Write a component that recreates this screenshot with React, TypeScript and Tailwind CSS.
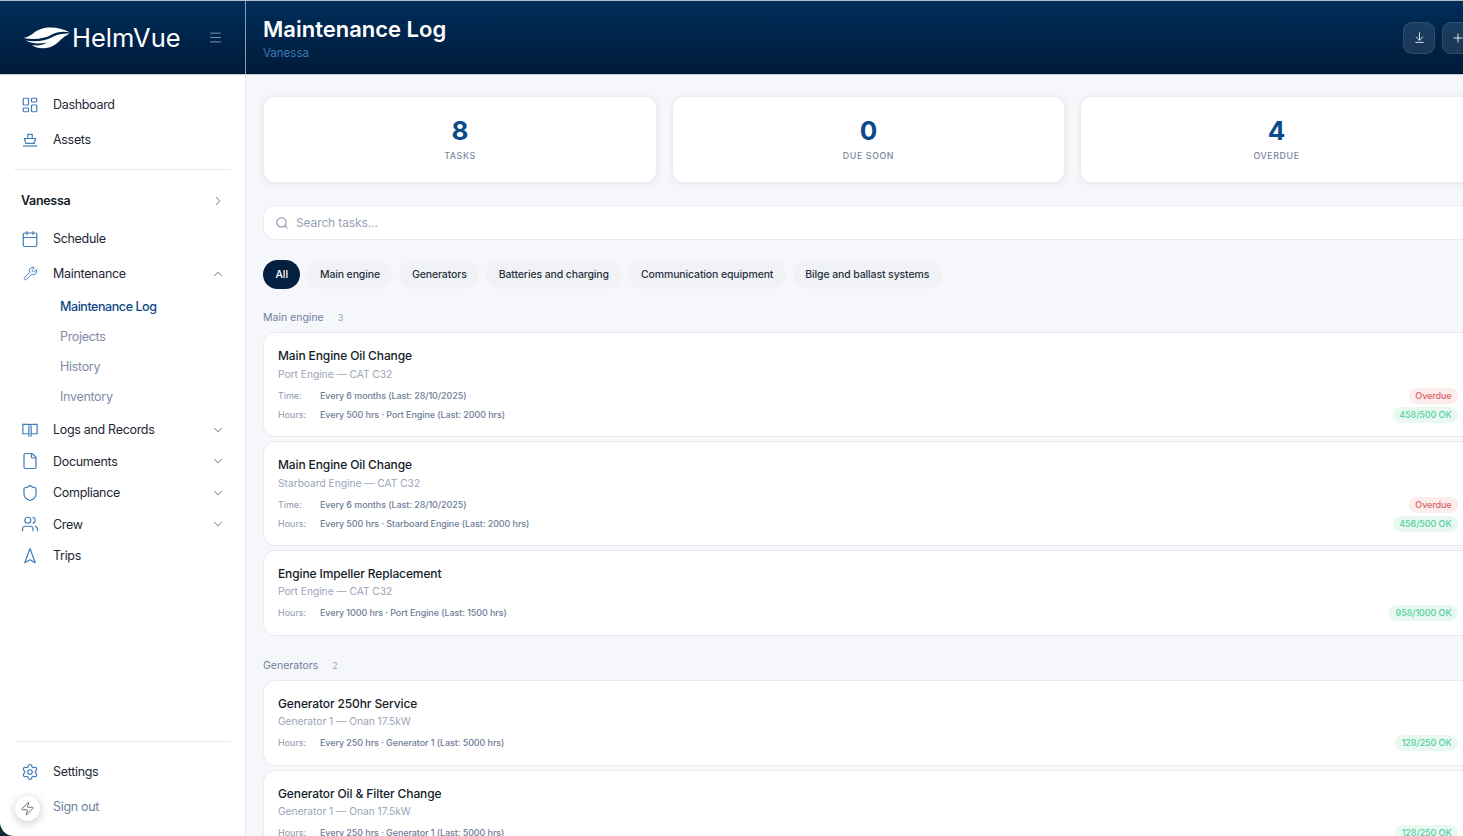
import React from "react";
import {
  LayoutDashboard,
  Calendar,
  Wrench,
  File,
  Shield,
  Users,
  Navigation2,
  Settings,
  Zap,
  Search,
  ArrowDownToLine,
  Plus,
  Menu,
  ChevronDown,
  ChevronUp,
  ChevronRight,
} from "lucide-react";

type IconProps = { className?: string; strokeWidth?: number };

const BoatIcon = ({ className, strokeWidth }: IconProps) => (
  <svg viewBox="0 0 24 24" fill="none" stroke="currentColor" strokeWidth={strokeWidth} className={className}>
    <path d="M9 9V4.5h6V9" />
    <path d="M4.5 10h15l-2 6.5h-11z" />
    <path d="M2.5 20h19" />
  </svg>
);

const OpenBookIcon = ({ className, strokeWidth }: IconProps) => (
  <svg viewBox="0 0 24 24" fill="none" stroke="currentColor" strokeWidth={strokeWidth} className={className}>
    <path d="M10.5 17H2.5V4.5h8c.8 0 1.5.7 1.5 1.5 0-.8.7-1.5 1.5-1.5h8V17h-8" />
    <path d="M10.5 6v15M13.5 6v15" />
  </svg>
);

const subItems = ["Projects", "History", "Inventory"];

const lowerNav = [
  { label: "Logs and Records", icon: OpenBookIcon, chevron: true },
  { label: "Documents", icon: File, chevron: true },
  { label: "Compliance", icon: Shield, chevron: true },
  { label: "Crew", icon: Users, chevron: true },
  { label: "Trips", icon: Navigation2, chevron: false },
];

const stats = [
  { value: "8", label: "TASKS" },
  { value: "0", label: "DUE SOON" },
  { value: "4", label: "OVERDUE" },
];

const filters = [
  "Main engine",
  "Generators",
  "Batteries and charging",
  "Communication equipment",
  "Bilge and ballast systems",
];

type Task = {
  title: string;
  sub: string;
  time?: string;
  hours: string;
  hoursBadge: string;
};

const groups: { name: string; count: number; tasks: Task[] }[] = [
  {
    name: "Main engine",
    count: 3,
    tasks: [
      {
        title: "Main Engine Oil Change",
        sub: "Port Engine — CAT C32",
        time: "Every 6 months (Last: 28/10/2025)",
        hours: "Every 500 hrs · Port Engine (Last: 2000 hrs)",
        hoursBadge: "458/500 OK",
      },
      {
        title: "Main Engine Oil Change",
        sub: "Starboard Engine — CAT C32",
        time: "Every 6 months (Last: 28/10/2025)",
        hours: "Every 500 hrs · Starboard Engine (Last: 2000 hrs)",
        hoursBadge: "456/500 OK",
      },
      {
        title: "Engine Impeller Replacement",
        sub: "Port Engine — CAT C32",
        hours: "Every 1000 hrs · Port Engine (Last: 1500 hrs)",
        hoursBadge: "958/1000 OK",
      },
    ],
  },
  {
    name: "Generators",
    count: 2,
    tasks: [
      {
        title: "Generator 250hr Service",
        sub: "Generator 1 — Onan 17.5kW",
        hours: "Every 250 hrs · Generator 1 (Last: 5000 hrs)",
        hoursBadge: "128/250 OK",
      },
      {
        title: "Generator Oil & Filter Change",
        sub: "Generator 1 — Onan 17.5kW",
        hours: "Every 250 hrs · Generator 1 (Last: 5000 hrs)",
        hoursBadge: "128/250 OK",
      },
    ],
  },
];

function NavRow({
  label,
  icon: Icon,
  chevron,
  rowClass,
  iconClass = "w-[18px] h-[18px]",
}: {
  label: string;
  icon: React.ComponentType<IconProps>;
  chevron?: "down" | "up";
  rowClass: string;
  iconClass?: string;
}) {
  return (
    <div className={`flex items-center pl-[21px] pr-[20px] ${rowClass}`}>
      <div className="w-[18px] h-[18px] shrink-0 flex items-center justify-center">
        <Icon className={`${iconClass} text-[#3f7cb8]`} strokeWidth={1.6} />
      </div>
      <span className="ml-[14px] pt-[2px] flex-1 text-[12.5px] tracking-[-0.025em] text-[#1e2635]">{label}</span>
      {chevron === "down" && <ChevronDown className="w-[14px] h-[14px] text-[#7e8ba3]" strokeWidth={1.75} />}
      {chevron === "up" && <ChevronUp className="w-[14px] h-[14px] text-[#7e8ba3]" strokeWidth={1.75} />}
    </div>
  );
}

function Sidebar() {
  return (
    <aside className="w-[246px] shrink-0 bg-white border-r border-[#e6e9f0] flex flex-col pt-[12px]">
      <NavRow label="Dashboard" icon={LayoutDashboard} rowClass="h-[35px]" />
      <NavRow label="Assets" icon={BoatIcon} rowClass="h-[35px]" />
      <div className="mx-[14px] mt-[12px] border-t border-[#e8eaef]" />
      <div className="flex items-center h-[35px] pl-[21px] pr-[20px] mt-[13px]">
        <span className="flex-1 pt-[1px] text-[12.5px] tracking-[-0.025em] font-semibold text-[#141b29]">Vanessa</span>
        <ChevronRight className="w-[14px] h-[14px] text-[#7e8ba3]" strokeWidth={1.75} />
      </div>
      <div className="h-[3px]" />
      <NavRow label="Schedule" icon={Calendar} rowClass="h-[35px]" />
      <NavRow
        label="Maintenance"
        icon={Wrench}
        chevron="up"
        rowClass="h-[35px]"
        iconClass="w-[15px] h-[15px]"
      />
      <div className="flex flex-col pl-[60px] pt-[1px] pb-[2px]">
        <div className="h-[30px] flex items-center text-[12.5px] tracking-[-0.035em] font-medium text-[#0f4a86]">
          Maintenance Log
        </div>
        {subItems.map((s) => (
          <div key={s} className="h-[30px] flex items-center text-[12.5px] tracking-[-0.025em] text-[#7f8ca6]">
            {s}
          </div>
        ))}
      </div>
      {lowerNav.map((n) => (
        <NavRow
          key={n.label}
          label={n.label}
          icon={n.icon}
          chevron={n.chevron ? "down" : undefined}
          rowClass="h-[31.5px]"
        />
      ))}
      <div className="flex-1" />
      <div className="mx-[14px] border-t border-[#e8eaef]" />
      <div className="h-[12px]" />
      <NavRow label="Settings" icon={Settings} rowClass="h-[35px]" />
      <div className="flex items-center h-[35px] pl-[53px] pt-[2px] text-[12.5px] tracking-[-0.025em] text-[#6f80a0] mb-[12px]">
        Sign out
      </div>
    </aside>
  );
}

function Badge({ tone, children }: { tone: "red" | "green"; children: React.ReactNode }) {
  return (
    <span
      className={`inline-flex items-center h-[16px] px-[6.5px] rounded-full text-[9px] tracking-[-0.01em] font-medium ${
        tone === "red" ? "bg-[#fcecec] text-[#d9646a]" : "bg-[#e9f9f1] text-[#4fd09c]"
      }`}
    >
      {children}
    </span>
  );
}

function DetailRow({ label, text, badge }: { label: string; text: string; badge: React.ReactNode }) {
  return (
    <div className="flex items-center h-[19px]">
      <span className="w-[42px] text-[9px] text-[#8d98ad]">{label}</span>
      <span className="flex-1 text-[9px] tracking-[-0.01em] font-medium text-[#6f7d96]">{text}</span>
      {badge}
    </div>
  );
}

function TaskCard({ task }: { task: Task }) {
  return (
    <div
      className={`bg-white border border-[#e8eaf0] rounded-[12px] pt-[14px] pl-[14px] pr-[14px] ${
        task.time ? "pb-[12px]" : "pb-[13px]"
      }`}
    >
      <div
        className={`text-[12px] tracking-[-0.01em] font-medium text-[#141b29] ${
          task.time ? "leading-[18.5px]" : "leading-[18px]"
        }`}
      >
        {task.title}
      </div>
      <div className={`text-[10.2px] leading-[16px] text-[#9aa5b8] ${task.time ? "mb-[2.5px]" : "mb-[2px]"}`}>
        {task.sub}
      </div>
      <div className="pt-[2px]">
        {task.time && <DetailRow label="Time:" text={task.time} badge={<Badge tone="red">Overdue</Badge>} />}
        <DetailRow label="Hours:" text={task.hours} badge={<Badge tone="green">{task.hoursBadge}</Badge>} />
      </div>
    </div>
  );
}

export default function App() {
  return (
    <div className="relative w-[1463px] h-[836px] overflow-hidden flex flex-col bg-[#f6f7fb] font-['Inter',sans-serif]">
      <header className="h-[75px] shrink-0 flex bg-gradient-to-b from-[#002d5b] to-[#001b39] border-t border-[#b5bbc4] border-b border-b-[#c5cad3]">
        <div className="w-[246px] shrink-0 flex items-center border-r border-[#8f9cae] pl-[23px] pr-[22px]">
          <svg width="47" height="22" viewBox="0 0 47 22" className="shrink-0">
            <path d="M0 11C8 10 11 4 18 2c8-2.5 19-2 29 3.5-6-1.500-13-1-19 2.500C22 11.500 12 13 0 11z" fill="#ffffff" />
            <path d="M2.500 13.500C13 15 22 14 29 10.200 34 7.400 39 6.600 47 6.500 41 9 38 13 33 17c-6 5-18 6-24 1 6 1 11 .2 15-2.500-7 1.500-15 1.500-21.500-2z" fill="#ffffff" />
          </svg>
          <span className="ml-[2px] text-[25.5px] leading-none font-normal text-white flex-1">HelmVue</span>
          <Menu className="w-[15px] h-[15px] text-[#8296ad]" strokeWidth={1.5} />
        </div>
        <div className="flex-1 flex items-center pl-[17px] pr-[0px] overflow-hidden">
          <div className="flex-1">
            <div className="text-[22px] leading-[28px] font-semibold text-white">Maintenance Log</div>
            <div className="mt-[2px] text-[11.5px] leading-[16px] text-[#3f79b5]">Vanessa</div>
          </div>
          <div className="flex gap-[7px] w-[60px] shrink-0">
            <div className="w-8 h-8 shrink-0 rounded-[9px] bg-white/10 border border-white/10 flex items-center justify-center">
              <ArrowDownToLine className="w-[13px] h-[13px] text-white" strokeWidth={1.5} />
            </div>
            <div className="w-8 h-8 shrink-0 rounded-[9px] bg-white/10 border border-white/10 flex items-center justify-center">
              <Plus className="w-[14px] h-[14px] text-white" strokeWidth={1.5} />
            </div>
          </div>
        </div>
      </header>

      <div className="flex flex-1 min-h-0">
        <Sidebar />
        <main className="flex-1 min-w-0 overflow-hidden pl-[17px] pt-[21px]">
          <div className="w-[1210px]">
            <div className="grid grid-cols-[394px_393px_1fr] gap-[15px]">
              {stats.map((s) => (
                <div
                  key={s.label}
                  className="h-[87px] bg-white rounded-[12px] border border-[#eceef3] shadow-[0_1px_6px_rgba(20,30,60,0.08)] flex flex-col items-center pt-[18px]"
                >
                  <div className="text-[26px] leading-[32px] font-bold text-[#0c4a8e]">{s.value}</div>
                  <div className="mt-[2px] text-[8.8px] leading-[14px] tracking-[0.07em] font-medium text-[#7c889e]">
                    {s.label}
                  </div>
                </div>
              ))}
            </div>

            <div className="mt-[22px] h-[35px] bg-white border border-[#e8eaf0] rounded-[12px] flex items-center pl-[11px]">
              <Search className="w-[14px] h-[14px] text-[#7e8ba3]" strokeWidth={1.75} />
              <span className="ml-[7px] mt-[1px] text-[12px] tracking-[-0.01em] text-[#98a3b6]">Search tasks...</span>
            </div>

            <div className="mt-[20px] flex gap-[7px]">
              <div className="h-[29px] px-[12.5px] rounded-full bg-[#03203f] flex items-center text-[10.5px] tracking-[-0.01em] font-medium text-white">
                All
              </div>
              {filters.map((f) => (
                <div
                  key={f}
                  className="h-[29px] px-[12.5px] rounded-full bg-[#f1f2f6] flex items-center text-[10.5px] tracking-[-0.012em] font-medium text-[#2a3242]"
                >
                  {f}
                </div>
              ))}
            </div>

            <div className="mt-[20px]">
              {groups.map((g) => (
                <section key={g.name} className="mb-[21px]">
                  <div className="flex items-center h-[16px] pt-[2px] mb-[7px]">
                    <span className="text-[10.5px] text-[#6f80a0]">{g.name}</span>
                    <span className="ml-[14px] text-[9px] text-[#9aa5b8]">{g.count}</span>
                  </div>
                  <div className="flex flex-col gap-[4px]">
                    {g.tasks.map((t, i) => (
                      <TaskCard key={i} task={t} />
                    ))}
                  </div>
                </section>
              ))}
            </div>
          </div>
        </main>
      </div>

      <div className="absolute left-0 bottom-0 w-[16px] h-[16px] bg-[#0d2b33]">
        <div className="w-full h-full bg-white rounded-bl-[14px]" />
      </div>
      <div className="absolute left-[15px] top-[796px] w-[25px] h-[25px] rounded-full bg-white shadow-[0_2px_10px_rgba(0,0,0,0.22)] flex items-center justify-center">
        <Zap className="w-[15px] h-[15px] text-[#666]" strokeWidth={1.5} />
      </div>
    </div>
  );
}
